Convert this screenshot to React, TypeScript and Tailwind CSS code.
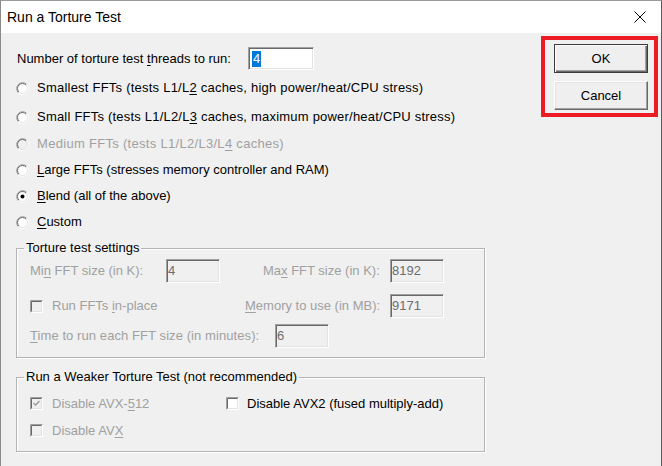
import React from 'react';

const U = ({ children }: { children: React.ReactNode }) => (
  <span className="underline underline-offset-[2px] decoration-1">{children}</span>
);

function Radio({ checked = false, disabled = false }: { checked?: boolean; disabled?: boolean }) {
  return (
    <svg width="13" height="13" viewBox="0 0 13 13" className="shrink-0">
      <circle cx="6.5" cy="6.5" r="5.5" fill={disabled ? '#f0f0f0' : '#ffffff'} />
      <path d="M2.26 10.74 A6 6 0 0 1 10.74 2.26" stroke="#a0a0a0" fill="none" />
      <path d="M10.74 2.26 A6 6 0 0 1 2.26 10.74" stroke="#ffffff" fill="none" />
      <path d="M2.96 10.04 A5 5 0 0 1 10.04 2.96" stroke="#696969" fill="none" />
      <path d="M10.04 2.96 A5 5 0 0 1 2.96 10.04" stroke="#e3e3e3" fill="none" />
      {checked && <circle cx="6.5" cy="6.5" r="2" fill="#000000" />}
    </svg>
  );
}

function Check({ checked = false, disabled = false }: { checked?: boolean; disabled?: boolean }) {
  return (
    <svg width="13" height="13" viewBox="0 0 13 13" className="shrink-0">
      <rect x="0" y="0" width="13" height="13" fill="#ffffff" />
      <path d="M0.5 12.5 V0.5 H12.5" stroke="#a0a0a0" fill="none" />
      <rect x="1" y="1" width="11" height="11" fill="#e3e3e3" />
      <path d="M1.5 11.5 V1.5 H11.5" stroke="#696969" fill="none" />
      <rect x="2" y="2" width="9" height="9" fill={disabled ? '#f0f0f0' : '#ffffff'} />
      {checked && (
        <path d="M3.5 6 L5.5 8 L9.5 4" stroke={disabled ? '#a0a0a0' : '#000000'} strokeWidth="1.6" fill="none" />
      )}
    </svg>
  );
}

function Field({ value }: { value: string }) {
  return (
    <div className="w-[54px] h-[24px] shrink-0 flex items-center pl-[1px] bg-[#f0f0f0] text-[#6d6d6d] border border-[#a0a0a0] border-b-white border-r-white shadow-[inset_1px_1px_0_#696969,inset_-1px_-1px_0_#e3e3e3]">
      {value}
    </div>
  );
}

function Group({ title, children }: { title: string; children: React.ReactNode }) {
  return (
    <fieldset className="border border-[#b4b4b4] p-0 m-0 shadow-[inset_1px_1px_0_#ffffff,1px_1px_0_#ffffff]">
      <legend className="ml-[7px] px-[2px] leading-[16px] text-black">{title}</legend>
      {children}
    </fieldset>
  );
}

function Button({ label, isDefault = false }: { label: string; isDefault?: boolean }) {
  return (
    <button
      className={`w-[94px] h-[29px] bg-[#efefef] text-black flex items-center justify-center ${
        isDefault
          ? 'border border-[#3c3c3c] shadow-[inset_1px_1px_0_#ffffff,inset_-1px_-1px_0_#696969,inset_-2px_-2px_0_#a0a0a0]'
          : 'border border-white border-b-[#696969] border-r-[#696969] shadow-[inset_-1px_-1px_0_#a0a0a0,inset_1px_1px_0_#e3e3e3]'
      }`}
    >
      {label}
    </button>
  );
}

const radios = [
  {
    label: <>Smallest FFTs (tests L1/L<U>2</U> caches, high power/heat/CPU stress)</>,
    row: 'mt-[5px]',
    track: 'tracking-[0.23px]',
  },
  {
    label: <>Small FFTs (tests L1/L2/L<U>3</U> caches, maximum power/heat/CPU stress)</>,
    row: 'mt-[3px]',
    track: 'tracking-[0.21px]',
  },
  {
    label: <>Medium FFTs (tests L1/L2/L3/L<U>4</U> caches)</>,
    row: 'mt-[1px]',
    track: 'tracking-[0.3px]',
    disabled: true,
  },
  { label: <><U>L</U>arge FFTs (stresses memory controller and RAM)</>, row: '' },
  { label: <><U>B</U>lend (all of the above)</>, row: '', checked: true },
  { label: <><U>C</U>ustom</>, row: '' },
];

export default function App() {
  return (
    <div className="w-[662px] h-[466px] flex flex-col overflow-hidden border-l border-r border-t border-l-[#8a8a8a] border-r-[#5a5a5a] border-t-[#9a9a9a] font-['Liberation_Sans',Arial,sans-serif] text-[13px] leading-[16px] text-black">
      {/* title bar */}
      <div className="h-[32px] shrink-0 bg-white flex items-center justify-between pl-[6px] pr-[15px]">
        <span className="text-[14px]">Run a Torture Test</span>
        <svg width="12" height="12" viewBox="0 0 12 12">
          <path d="M0.5 0.5 L11.5 11.5 M11.5 0.5 L0.5 11.5" stroke="#000" strokeWidth="1" />
        </svg>
      </div>

      <div className="flex-1 bg-[#f0f0f0] flex">
        {/* left column */}
        <div className="w-[484px] pl-[15px] pt-[14px] flex flex-col">
          <div className="flex items-center h-[23px] pl-[1px]">
            <span className="w-[231px]">
              Number of torture test <U>t</U>hreads to run:
            </span>
            <div className="w-[66px] h-[23px] bg-white flex items-center pl-[3px] border border-[#a0a0a0] border-b-white border-r-white shadow-[inset_1px_1px_0_#696969,inset_-1px_-1px_0_#e3e3e3]">
              <span className="bg-[#0078d7] text-white px-[1px] leading-[16px]">4</span>
            </div>
          </div>

          <div className="flex flex-col">
            {radios.map((r, i) => (
              <div key={i} className={`h-[26px] flex items-center gap-[8px] ${r.row}`}>
                <Radio checked={r.checked} disabled={r.disabled} />
                <span className={`${r.disabled ? 'text-[#a0a0a0]' : ''} ${r.track ?? ''}`}>{r.label}</span>
              </div>
            ))}
          </div>

          <div className="mt-[5px]">
            <Group title="Torture test settings">
              <div className="pl-[13px] pt-[3px] pb-[9px] text-[#a0a0a0] flex flex-col">
                <div className="flex items-center h-[24px]">
                  <span className="w-[136px]">
                    Mi<U>n</U> FFT size (in K):
                  </span>
                  <Field value="4" />
                  <span className="ml-[43px] w-[127px]">
                    Ma<U>x</U> FFT size (in K):
                  </span>
                  <Field value="8192" />
                </div>
                <div className="flex items-center h-[24px] mt-[11px]">
                  <div className="w-[215px] flex items-center gap-[9px]">
                    <Check disabled />
                    <span>
                      Run FFTs <U>i</U>n-place
                    </span>
                  </div>
                  <span className="w-[145px]">
                    <U>M</U>emory to use (in MB):
                  </span>
                  <Field value="9171" />
                </div>
                <div className="flex items-center h-[24px] mt-[6px]">
                  <span className="w-[245px] tracking-[0.08px]">
                    <U>T</U>ime to run each FFT size (in minutes):
                  </span>
                  <Field value="6" />
                </div>
              </div>
            </Group>
          </div>

          <div className="mt-[11px]">
            <Group title="Run a Weaker Torture Test (not recommended)">
              <div className="pl-[13px] pt-[5px] pb-[7px] flex flex-col">
                <div className="flex items-center h-[27px]">
                  <div className="w-[196px] flex items-center gap-[9px] text-[#a0a0a0]">
                    <Check checked disabled />
                    <span>
                      Disable AVX-<U>5</U>12
                    </span>
                  </div>
                  <div className="flex items-center gap-[8px]">
                    <Check />
                    <span>Disable AVX2 (fused multiply-add)</span>
                  </div>
                </div>
                <div className="flex items-center h-[27px]">
                  <div className="flex items-center gap-[9px] text-[#a0a0a0]">
                    <Check disabled />
                    <span>
                      Disable AV<U>X</U>
                    </span>
                  </div>
                </div>
              </div>
            </Group>
          </div>
        </div>

        {/* buttons, highlighted */}
        <div className="ml-[56px] mt-[3px] w-[117px] h-[81px] border-4 border-[#ed1c24] pt-[4px] pl-[9px] flex flex-col gap-[8px]">
          <Button label="OK" isDefault />
          <Button label="Cancel" />
        </div>
      </div>
    </div>
  );
}
